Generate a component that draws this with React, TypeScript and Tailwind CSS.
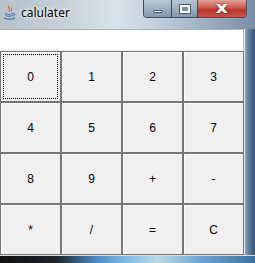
import React from "react";

const keys = ["0", "1", "2", "3", "4", "5", "6", "7", "8", "9", "+", "-", "*", "/", "=", "C"];

function JavaIcon() {
  return (
    <svg width="13" height="15" viewBox="0 0 13 15">
      <path d="M6 1 C4 3 8 4 6 6.5" stroke="#d9622b" strokeWidth="1.2" fill="none" />
      <path d="M8.5 2.5 C7.5 4 9.5 4.5 8 6.5" stroke="#d9622b" strokeWidth="1" fill="none" />
      <path d="M2 8.5 C4 9.5 8 9.5 10 8.5" stroke="#3b6ea5" strokeWidth="1.2" fill="none" />
      <path d="M2.5 10.5 C4.5 11.5 7.5 11.5 9.5 10.5" stroke="#3b6ea5" strokeWidth="1" fill="none" />
      <path d="M1 13 C4 14.5 9 14.5 12 13" stroke="#3b6ea5" strokeWidth="1.2" fill="none" />
      <path d="M10 8.5 C12.5 8 12.5 10.5 10 11" stroke="#3b6ea5" strokeWidth="0.9" fill="none" />
    </svg>
  );
}

export default function App() {
  return (
    <div className="w-[255px] h-[263px] overflow-hidden flex flex-col bg-[#3a5674] [font-family:'Liberation_Sans',Arial,sans-serif]">
      {/* title bar */}
      <div className="relative h-[29px] shrink-0 flex items-start bg-[linear-gradient(90deg,#b7c1ca_0%,#c6d0d8_25%,#d9e3eb_45%,#c1cfdc_62%,#93a8bc_85%,#768ea6_100%)]">
        <div className="mt-[5px] ml-[3px]">
          <JavaIcon />
        </div>
        <span className="ml-[5px] mt-[5px] text-[12px] leading-[15px] text-black [font-family:'Noto_Sans',sans-serif] [text-shadow:0_0_5px_#fff,0_0_3px_#fff]">
          calulater
        </span>
        <div className="absolute left-[143px] top-0 h-[18px] flex border border-t-0 border-[#3c4b5c] rounded-b-[4px] overflow-hidden shadow-[0_0_1px_#fff]">
          <div className="w-[28px] h-full flex items-center justify-center border-r border-[#3c4b5c] bg-[linear-gradient(180deg,#b9c7d5_0%,#9fb1c3_50%,#8397ab_100%)]">
            <div className="w-[10px] h-[3px] mt-[6px] bg-white border border-[#4a5a6a] rounded-[1px]" />
          </div>
          <div className="w-[26px] h-full flex items-center justify-center border-r border-[#3c4b5c] bg-[linear-gradient(180deg,#b9c7d5_0%,#9fb1c3_50%,#8397ab_100%)]">
            <div className="w-[10px] h-[8px] border-2 border-white outline outline-1 outline-[#4a5a6a] bg-[#7d8fa2]" />
          </div>
          <div className="w-[48px] h-full flex items-center justify-center bg-[linear-gradient(180deg,#e2a49a_0%,#d0574b_45%,#b8352a_60%,#c9544a_100%)]">
            <span className="text-white font-bold text-[15px] leading-none scale-x-125 [font-family:'DejaVu_Sans',sans-serif] [text-shadow:0_0_2px_#5a1a14]">
              x
            </span>
          </div>
        </div>
      </div>

      {/* middle */}
      <div className="flex h-[226px] shrink-0">
        <div className="w-[245px] flex flex-col bg-[#f0f0f0] border-r border-[#e6ecf1]">
          <div className="h-[22px] bg-white border-t border-r border-[#a9b3bc] border-b border-b-[#eaeef2]" />
          <div className="grid grid-cols-4 grid-rows-4 h-[204px]">
            {keys.map((k, i) => (
              <div
                key={k}
                className="relative flex items-center justify-center border border-[#767676] bg-[#f0f0f0] text-[12px] text-black shadow-[inset_1px_1px_0_#fbfbfb]"
              >
                {i === 0 && (
                  <div className="absolute left-[2px] top-[2px] right-[2px] bottom-[2px] border border-dotted border-black" />
                )}
                {k}
              </div>
            ))}
          </div>
        </div>
        <div className="flex-1 bg-[linear-gradient(90deg,#8aa6c0_0%,#5c7d9e_40%,#34516f_100%)]" />
      </div>

      {/* bottom frame */}
      <div className="flex-1 border-t border-[#d5dee6] bg-[linear-gradient(90deg,#101010_0%,#1c232b_22%,#4b8fc7_38%,#8cc3e6_52%,#bcd9e2_62%,#6ea9d6_78%,#3c6f9f_100%)]" />
    </div>
  );
}
